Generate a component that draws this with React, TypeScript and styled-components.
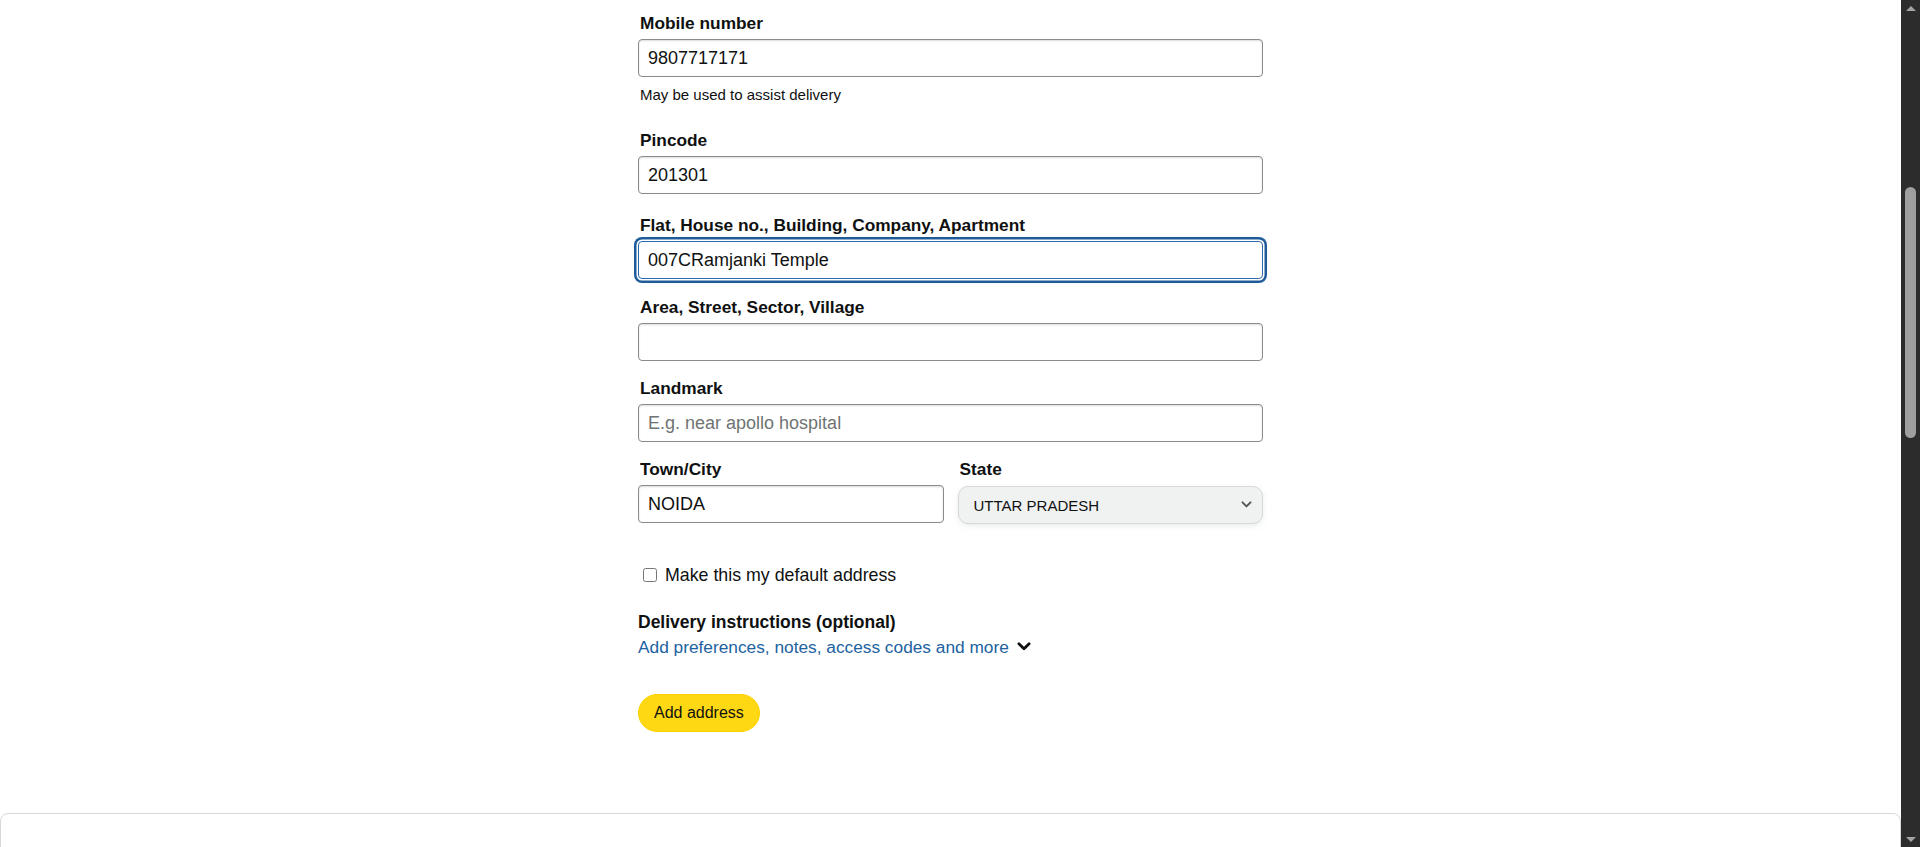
import React from "react";
import styled, { createGlobalStyle } from "styled-components";

const GlobalStyle = createGlobalStyle`
  html, body {
    margin: 0;
    padding: 0;
    overflow: hidden;
    background: #fff;
  }
  body {
    font-family: "Liberation Sans", Arial, sans-serif;
    color: #0f1111;
  }
`;

const Page = styled.div`
  display: flex;
  width: 1920px;
  height: 847px;
  overflow: hidden;
`;

const Main = styled.main`
  flex: 1;
  min-width: 0;
  display: flex;
  flex-direction: column;
  align-items: center;
  overflow: hidden;
  & > * {
    flex-shrink: 0;
  }
`;

const Form = styled.form`
  width: 625px;
  padding-top: 13px;
  display: flex;
  flex-direction: column;
`;

const Field = styled.div<{ $gap?: number }>`
  margin-top: ${({ $gap }) => $gap ?? 0}px;
  display: flex;
  flex-direction: column;
  min-width: 0;
`;

const Label = styled.label`
  font-size: 17.3px;
  font-weight: 700;
  line-height: 20px;
  margin-bottom: 6px;
  padding-left: 2px;
`;

const Helper = styled.div`
  font-size: 15px;
  line-height: 18px;
  margin-top: 9px;
  padding-left: 2px;
`;

const TextInput = styled.input<{ $focused?: boolean }>`
  box-sizing: border-box;
  width: 100%;
  height: 38px;
  margin: 0;
  padding: 0 9px;
  font-family: "Liberation Sans", Arial, sans-serif;
  font-size: 18px;
  color: #0f1111;
  background: #fff;
  border: 1px solid ${({ $focused }) => ($focused ? "#2b6aad" : "#888c8c")};
  border-radius: 4px;
  box-shadow: ${({ $focused }) =>
    $focused
      ? "0 0 0 1.5px #fff, 0 0 0 4px #1f5b99"
      : "inset 0 1px 2px rgba(15, 17, 17, 0.15)"};
  outline: none;
  &::placeholder {
    color: #6f7373;
  }
`;

const TwoCols = styled.div`
  margin-top: 17px;
  display: grid;
  grid-template-columns: 1fr 1fr;
  column-gap: 14px;
`;

const SelectBox = styled.div`
  box-sizing: border-box;
  height: 38px;
  margin-top: 1px;
  display: flex;
  align-items: center;
  justify-content: space-between;
  padding: 0 10px 0 15px;
  background: #f0f2f2;
  border: 1px solid #d5d9d9;
  border-radius: 10px;
  box-shadow: 0 2px 5px rgba(213, 217, 217, 0.5);
  font-size: 15px;
  color: #0f1111;
`;

const CheckRow = styled.label`
  margin-top: 40px;
  height: 22px;
  display: flex;
  align-items: center;
  gap: 8px;
  padding-left: 5px;
  font-size: 17.8px;
`;

const CheckBox = styled.input`
  width: 14px;
  height: 14px;
  margin: 0;
`;

const SectionTitle = styled.div`
  margin-top: 25px;
  font-size: 17.5px;
  font-weight: 700;
  line-height: 22px;
`;

const ExpandLink = styled.a`
  margin-top: 2px;
  line-height: 24px;
  display: flex;
  align-items: center;
  gap: 8px;
  font-size: 17.3px;
  color: #2162a1;
  text-decoration: none;
  cursor: pointer;
`;

const YellowButton = styled.button`
  margin-top: 35px;
  align-self: flex-start;
  height: 38px;
  padding: 0 15px;
  background: #ffd814;
  border: 1px solid #fcd200;
  border-radius: 19px;
  font-family: "Liberation Sans", Arial, sans-serif;
  font-size: 16px;
  color: #0f1111;
  cursor: pointer;
`;

const Card = styled.section`
  align-self: stretch;
  box-sizing: border-box;
  margin-top: 81px;
  height: 200px;
  padding: 28px 99px;
  border: 1px solid #d5d9d9;
  border-radius: 8px;
`;

const CardTitle = styled.h2`
  margin: 0;
  font-size: 24px;
  font-weight: 700;
  line-height: 30px;
`;

const ScrollTrack = styled.div`
  width: 19px;
  height: 847px;
  background: #2c2c2c;
  display: flex;
  flex-direction: column;
  align-items: center;
`;

const ScrollArrow = styled.div<{ $down?: boolean }>`
  height: 16px;
  width: 100%;
  display: flex;
  align-items: center;
  justify-content: center;
  &::before {
    content: "";
    width: 0;
    height: 0;
    border-left: 5px solid transparent;
    border-right: 5px solid transparent;
    ${({ $down }) =>
      $down ? "border-top: 5px solid #a3a3a3;" : "border-bottom: 5px solid #a3a3a3;"}
  }
`;

const ScrollThumb = styled.div`
  margin-top: 171px;
  width: 11px;
  height: 251px;
  border-radius: 6px;
  background: #9f9f9f;
`;

const Spacer = styled.div`
  flex: 1;
`;

const Chevron = ({ size, color, stroke }: { size: number; color: string; stroke: number }) => (
  <svg width={size} height={size * 0.65} viewBox="0 0 12 8" fill="none">
    <path d="M1.5 1.5 L6 6 L10.5 1.5" stroke={color} strokeWidth={stroke} strokeLinecap="round" strokeLinejoin="round" />
  </svg>
);

const App = () => {
  return (
    <>
      <GlobalStyle />
      <Page>
        <Main>
          <Form onSubmit={(e) => e.preventDefault()}>
            <Field>
              <Label>Mobile number</Label>
              <TextInput value="9807717171" readOnly />
              <Helper>May be used to assist delivery</Helper>
            </Field>
            <Field $gap={26}>
              <Label>Pincode</Label>
              <TextInput value="201301" readOnly />
            </Field>
            <Field $gap={21}>
              <Label>Flat, House no., Building, Company, Apartment</Label>
              <TextInput value="007CRamjanki Temple" readOnly $focused />
            </Field>
            <Field $gap={18}>
              <Label>Area, Street, Sector, Village</Label>
              <TextInput value="" readOnly />
            </Field>
            <Field $gap={17}>
              <Label>Landmark</Label>
              <TextInput value="" placeholder="E.g. near apollo hospital" readOnly />
            </Field>
            <TwoCols>
              <Field>
                <Label>Town/City</Label>
                <TextInput value="NOIDA" readOnly />
              </Field>
              <Field>
                <Label>State</Label>
                <SelectBox>
                  <span>UTTAR PRADESH</span>
                  <Chevron size={11} color="#555" stroke={2.2} />
                </SelectBox>
              </Field>
            </TwoCols>
            <CheckRow>
              <CheckBox type="checkbox" />
              Make this my default address
            </CheckRow>
            <SectionTitle>Delivery instructions (optional)</SectionTitle>
            <ExpandLink>
              Add preferences, notes, access codes and more
              <Chevron size={14} color="#0f1111" stroke={2.4} />
            </ExpandLink>
            <YellowButton type="submit">Add address</YellowButton>
          </Form>
          <Card>
            <CardTitle>Other addresses</CardTitle>
          </Card>
        </Main>
        <ScrollTrack>
          <ScrollArrow />
          <ScrollThumb />
          <Spacer />
          <ScrollArrow $down />
        </ScrollTrack>
      </Page>
    </>
  );
};

export default App;
